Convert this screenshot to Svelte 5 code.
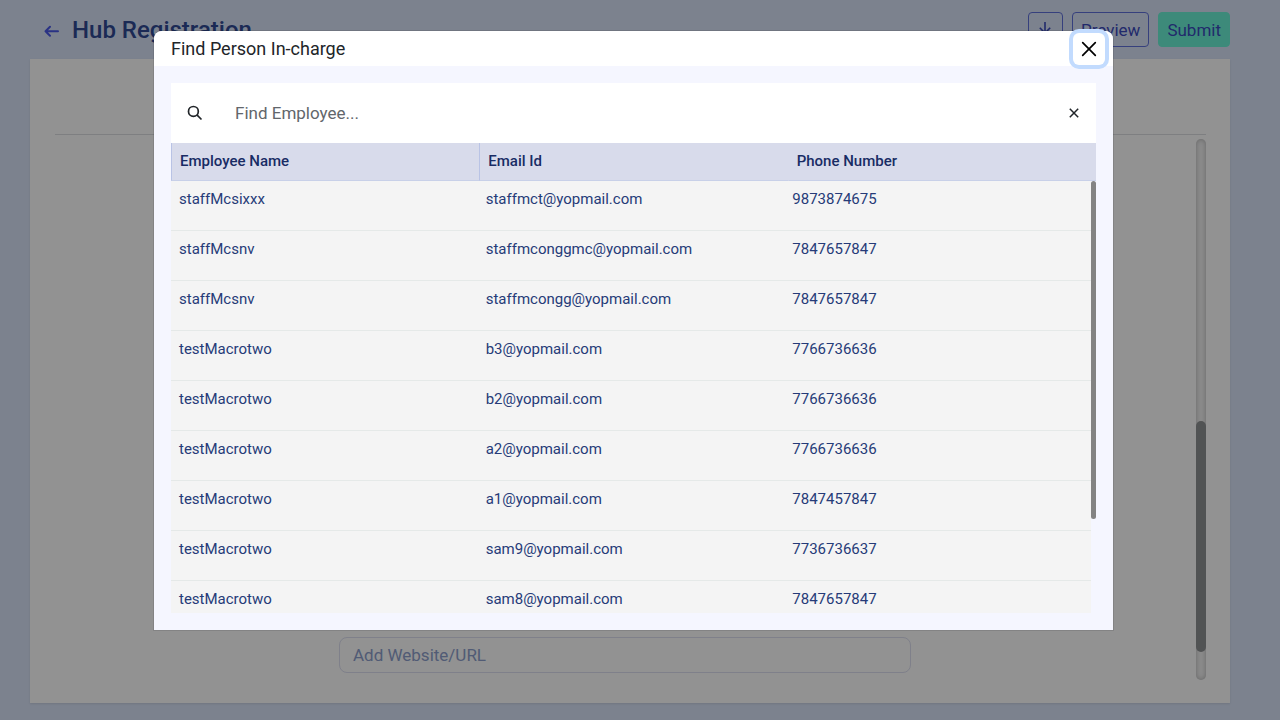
<script>
  const people = [
    ['staffMcsixxx', 'staffmct@yopmail.com', '9873874675'],
    ['staffMcsnv', 'staffmconggmc@yopmail.com', '7847657847'],
    ['staffMcsnv', 'staffmcongg@yopmail.com', '7847657847'],
    ['testMacrotwo', 'b3@yopmail.com', '7766736636'],
    ['testMacrotwo', 'b2@yopmail.com', '7766736636'],
    ['testMacrotwo', 'a2@yopmail.com', '7766736636'],
    ['testMacrotwo', 'a1@yopmail.com', '7847457847'],
    ['testMacrotwo', 'sam9@yopmail.com', '7736736637'],
    ['testMacrotwo', 'sam8@yopmail.com', '7847657847']
  ];
  let query = $state('');
  let website = $state('');
  let open = $state(true);
  const shown = $derived(people.filter((p) => p[0].toLowerCase().includes(query.toLowerCase())));
</script>

<div class="page">
  <header class="topbar">
    <button class="back" aria-label="Back">
      <svg width="16" height="16" viewBox="0 0 16 16" fill="none" stroke="currentColor" stroke-width="2" stroke-linecap="round" stroke-linejoin="round"><path d="M15 9.300H2.500M7 4.800L2.500 9.300l4.500 4.500" /></svg>
    </button>
    <h1>Hub Registration</h1>
    <div class="actions">
      <button class="outline icon" aria-label="Download">
        <svg width="14" height="16" viewBox="0 0 14 16" fill="none" stroke="currentColor" stroke-width="1.600"><path d="M7 0v11M1.800 5.800L7 11l5.200-5.200" /></svg>
      </button>
      <button class="outline">Preview</button>
      <button class="submit">Submit</button>
    </div>
  </header>
  <main class="card">
    <div class="divider"></div>
    <div class="form-area">
      <input class="website" type="url" aria-label="Website" placeholder="Add Website/URL" bind:value={website} />
      <div class="track"><div class="thumb"></div></div>
    </div>
  </main>
</div>

{#if open}
  <div class="overlay">
    <div class="modal" role="dialog" aria-modal="true" aria-labelledby="dialog-title">
      <div class="modal-head">
        <h2 id="dialog-title">Find Person In-charge</h2>
        <button class="close" aria-label="Close" onclick={() => (open = false)}>
          <svg width="16" height="16" viewBox="0 0 16 16" fill="none" stroke="currentColor" stroke-width="1.700" stroke-linecap="round"><path d="M1.700 1.700l12.600 12.600M14.300 1.700L1.700 14.300" /></svg>
        </button>
      </div>
      <div class="modal-body">
        <div class="search">
          <svg class="glass" width="16" height="16" viewBox="0 0 16 16" fill="none" stroke="currentColor" stroke-width="1.700"><circle cx="6.400" cy="6.400" r="4.900" /><path d="M9.900 9.900L14.500 14.500" /></svg>
          <input type="text" aria-label="Find Employee" placeholder="Find Employee..." bind:value={query} />
          <button class="clear" aria-label="Clear" onclick={() => (query = '')}>
            <svg width="10" height="10" viewBox="0 0 10 10" fill="none" stroke="currentColor" stroke-width="1.500"><path d="M.8.800l8.400 8.400M9.200.8L.8 9.200" /></svg>
          </button>
        </div>
        <div class="table-wrap">
          <table>
            <thead>
              <tr><th scope="col">Employee Name</th><th scope="col">Email Id</th><th scope="col">Phone Number</th></tr>
            </thead>
            <tbody>
              {#each shown as person}
                <tr>{#each person as value}<td>{value}</td>{/each}</tr>
              {/each}
            </tbody>
          </table>
          <div class="list-thumb"></div>
        </div>
      </div>
    </div>
  </div>
{/if}

<style>
  :global(body) { margin: 0; background: #cfd9ed; }
  * { box-sizing: border-box; }
  button, input { font-family: inherit; }
  button { cursor: pointer; }
  .page, .overlay { font-family: Roboto, sans-serif; }
  .page { height: 100vh; padding: 0 50px 17px 30px; display: flex; flex-direction: column; }
  .topbar { height: 59px; flex: none; display: flex; align-items: center; padding-left: 12px; }
  .back { border: 0; background: none; padding: 0; width: 18px; color: #4654dc; display: flex; justify-content: center; }
  h1 { margin: 0 0 0 12px; font-size: 24px; line-height: 32px; font-weight: 500; color: #2d468e; }
  .actions { margin-left: auto; display: flex; gap: 9px; }
  .actions button { height: 35px; border-radius: 4px; font-size: 17px; padding: 0 8px; color: #3846b4; border: 1px solid #5a6bd0; background: transparent; }
  .actions .icon { width: 35px; padding: 0; display: flex; align-items: center; justify-content: center; }
  .actions .submit { background: #66e6cb; border-color: #66e6cb; }
  .card { flex: 1; min-height: 0; background: #f3f3f4; padding: 75px 24px 23px 25px; display: flex; flex-direction: column; box-shadow: 0 1px 2px rgba(0, 0, 0, .1); }
  .divider { height: 1px; flex: none; background: #d2d4d8; margin-bottom: 4px; }
  .form-area { flex: 1; display: flex; align-items: flex-end; padding-left: 284px; }
  .website { flex: 1; min-width: 0; height: 36px; margin: 0 285px 7px 0; padding: 0 13px; border: 1px solid #d4d6e6; border-radius: 8px; background: transparent; font-size: 17px; color: #2d468e; }
  .website::placeholder { color: #8798c3; opacity: 1; }
  .track { width: 10px; height: 100%; border-radius: 5px; background: #e6e6e7; box-shadow: inset 0 0 5px #aaa; display: flex; flex-direction: column; justify-content: flex-end; padding-bottom: 28px; }
  .thumb { height: 45%; border-radius: 5px; background: #888a8c; }

  .overlay { position: fixed; inset: 0; padding: 31px 167px 90px 154px; background: rgba(0, 0, 0, .4); display: flex; }
  .modal { flex: 1; min-width: 0; display: flex; flex-direction: column; background: #f5f6ff; border-radius: 8px 8px 0 0; box-shadow: 0 0 0 1px rgba(0, 0, 0, .1); }
  .modal-head { height: 35px; flex: none; display: flex; align-items: center; justify-content: space-between; padding: 0 8px 0 17px; background: #fff; border-radius: 8px 8px 0 0; }
  h2 { margin: 0; font-size: 18px; line-height: 24px; font-weight: 400; color: #212529; }
  .close { width: 32px; height: 32px; padding: 0; border: 0; border-radius: 6px; background: #fff; color: #000; display: flex; align-items: center; justify-content: center; box-shadow: 0 0 0 4px #c2dbfe; }
  .modal-body { flex: 1; min-height: 0; padding: 17px; display: flex; flex-direction: column; }
  .search { height: 60px; flex: none; display: flex; align-items: center; padding: 0 8px 0 16px; background: #fff; color: #212529; }
  .glass { flex: none; }
  .search input { flex: 1; min-width: 0; height: 40px; margin-left: 16px; padding: 0 16px; border: 0; outline: 0; background: transparent; font-size: 17px; color: #212529; }
  .search input::placeholder { color: #62666b; opacity: 1; }
  .clear { width: 28px; height: 28px; padding: 0; border: 0; background: none; color: #212529; display: flex; align-items: center; justify-content: center; }
  .table-wrap { position: relative; flex: 1; min-height: 0; }
  table { height: 100%; display: flex; flex-direction: column; font-size: 15px; line-height: 20px; color: #263b78; }
  thead { display: block; flex: none; }
  tr { display: grid; grid-template-columns: repeat(3, 1fr); }
  th { height: 38px; padding: 8px; text-align: left; font-weight: 500; color: #182c65; background: #d8dbeb; border-bottom: 1px solid #c8d0e8; border-left: 1px solid #b9c3e5; }
  th:last-child { border-left-color: transparent; }
  tbody { display: block; flex: 1; min-height: 0; margin-right: 5px; overflow: auto; scrollbar-width: none; background: #f4f4f4; }
  td { height: 50px; padding: 8px; border-bottom: 1px solid #e5e9e8; }
  .list-thumb { position: absolute; top: 38px; right: 0; width: 5px; height: 72%; border-radius: 3px; background: #838383; }
</style>
